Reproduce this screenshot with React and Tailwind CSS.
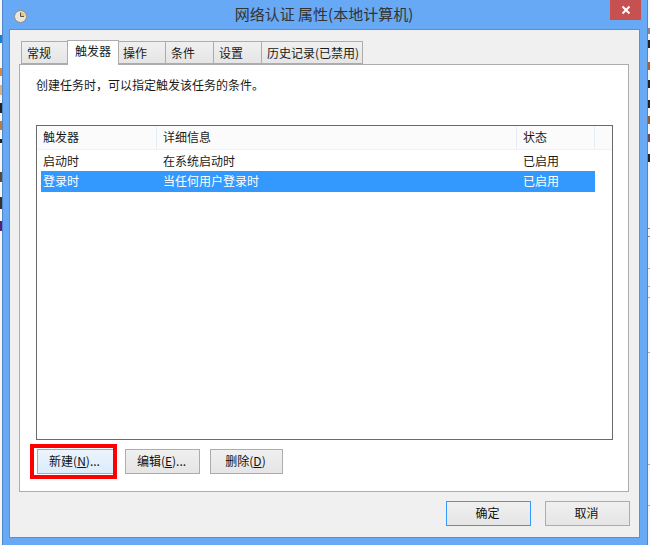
const tabs = [
  { label: '常规', w: 'w-[47px] pl-[5px]' },
  { label: '触发器', w: 'w-[52px] pl-[7px]', active: true },
  { label: '操作', w: 'w-[48px] pl-[4px]' },
  { label: '条件', w: 'w-[49px] pl-[5px]' },
  { label: '设置', w: 'w-[49px] pl-[5px]' },
  { label: '历史记录(已禁用)', w: 'w-[102px] pl-[5px]' },
]

const rows = [
  { name: '启动时', detail: '在系统启动时', state: '已启用' },
  { name: '登录时', detail: '当任何用户登录时', state: '已启用', selected: true },
]

// bits of the window behind the dialog, cut off at the screen edges
const leftBits = [
  'mt-[35px] h-[8px] bg-[#1b7fd0]',
  'mt-[25px] h-[8px] bg-[#d98a3a]',
  'mt-[9px] h-[10px] bg-[#e0b080]',
  'mt-[8px] h-[10px] bg-[#222222]',
  'mt-[8px] h-[9px] bg-[#c77a30]',
  'mt-[9px] h-[4px] bg-[#222222]',
  'mt-[29px] h-[10px] bg-[#5a4a30]',
  'mt-[15px] h-[12px] bg-[#3a3028]',
  'mt-[12px] h-[10px] bg-[#5a1a80]',
]

const rightBits = [
  'mt-[28px] h-[6px] bg-[#888888]',
  'mt-[6px] h-[8px] bg-[#222222]',
  'mt-[14px] h-[8px] bg-[#b0602a]',
  'mt-[10px] h-[8px] bg-[#222222]',
  'mt-[12px] h-[8px] bg-[#222222]',
  'mt-[8px] h-[8px] bg-[#a05a30]',
  'mt-[10px] h-[8px] bg-[#704a50]',
  'mt-[12px] h-[8px] bg-[#222222]',
  'mt-[66px] h-px bg-[#888888]',
  'mt-[7px] h-px bg-[#888888]',
  'mt-[31px] h-px bg-[#aaaaaa]',
  'mt-[17px] h-px bg-[#aaaaaa]',
  'mt-[10px] h-px bg-[#aaaaaa]',
  'mt-[54px] h-px bg-[#aaaaaa]',
  'mt-[111px] h-px bg-[#aaaaaa]',
  'mt-[40px] h-px bg-[#aaaaaa]',
]

const ClockIcon = () => (
  <svg width="13" height="13" viewBox="0 0 13 13">
    <circle cx="6.5" cy="6.5" r="6" fill="#e9e6da" stroke="#8d8d86" />
    <path d="M6.5 6.5V2A4.5 4.5 0 0 1 11 6.5Z" fill="#f0c36a" />
    <path d="M6.5 2.5v4h3.5" fill="none" stroke="#55564f" strokeWidth="1" />
  </svg>
)

const Button = ({ children, className = '', border = 'border-[#acacac]', fill = 'from-[#f0f0f0] to-[#e5e5e5]' }) => (
  <button className={`h-[25px] border bg-gradient-to-b pr-[2px] pb-[2px] text-xs text-[#111] ${border} ${fill} ${className}`}>
    {children}
  </button>
)

export default function App() {
  return (
    <div className="flex h-[545px] w-[650px] overflow-hidden bg-[#f6f6f6] font-['Noto_Sans_CJK_SC',sans-serif] text-xs text-[#1a1a1a]">
      <div className="flex w-[2px] flex-col">
        {leftBits.map((bit, i) => <div key={i} className={bit} />)}
      </div>

      <div className="h-[545px] w-[646px] border-x border-[#4f86c9] bg-[#68a9f5] px-[6px]">
        <div className="flex h-[29px] items-start">
          <div className="mt-[10px] ml-[5px] h-[13px] w-[13px]"><ClockIcon /></div>
          <div className="mt-[4px] flex-1 pl-[11px] text-center text-[15px] leading-[20px] text-[#333]">网络认证 属性(本地计算机)</div>
          <div className="flex h-[20px] w-[31px] items-center justify-center bg-[#c75050]">
            <svg width="10" height="10" viewBox="0 0 10 10"><path d="M1.5 1.5l7 7M8.5 1.5l-7 7" stroke="#fff" strokeWidth="2" /></svg>
          </div>
        </div>

        <div className="h-[509px] w-[631px] border border-[#5d8fc9] bg-[#f0f0f0] pt-[10px] pl-[9px]">
          <div className="flex h-[24px] items-end pl-[3px]">
            {tabs.map((tab) => (
              <div
                key={tab.label}
                className={`${tab.w} ml-[-1px] border border-[#acacac] ${
                  tab.active
                    ? 'z-10 mb-[-1px] h-[25px] border-b-0 bg-white pt-[2px]'
                    : 'h-[23px] bg-gradient-to-b from-[#f0f0f0] to-[#e5e5e5] pt-[3px]'
                }`}
              >
                {tab.label}
              </div>
            ))}
          </div>

          <div className="h-[428px] w-[610px] border border-[#acacac] bg-white pt-[12px] pl-[16px]">
            <p className="h-[48px]">创建任务时{'\uFF0C'}可以指定触发该任务的条件。</p>

            <div className="h-[315px] w-[577px] border border-[#6a6a6a] bg-white">
              <div className="flex h-[24px] border-b border-[#eef2fb] bg-[#fbfbfb]">
                <div className="w-[120px] border-r border-[#e6ecf8] pt-[3px] pl-[6px]">触发器</div>
                <div className="w-[360px] border-r border-[#e6ecf8] pt-[3px] pl-[6px]">详细信息</div>
                <div className="w-[78px] border-r border-[#e6ecf8] pt-[3px] pl-[6px]">状态</div>
              </div>
              {rows.map((row) => (
                <div key={row.name} className={`ml-[4px] flex h-[21px] w-[554px] items-center ${row.selected ? 'bg-[#3399ff] pb-[2px] text-white' : ''}`}>
                  <div className="w-[120px] pl-[2px]">{row.name}</div>
                  <div className="w-[360px] pl-[2px]">{row.detail}</div>
                  <div className="pl-[2px]">{row.state}</div>
                </div>
              ))}
            </div>

            <div className="mt-[9px] ml-[1px] flex">
              <div className="relative">
                <Button className="w-[77px]" border="border-[#7eb4ea]" fill="from-[#ecf4fc] to-[#dcecfc]">新建(<span className="underline">N</span>)...</Button>
                <div className="pointer-events-none absolute -top-[5px] -left-[7px] h-[35px] w-[87px] border-4 border-[#ff0000]" />
              </div>
              <Button className="ml-[11px] w-[75px]">编辑(<span className="underline">E</span>)...</Button>
              <Button className="ml-[10px] w-[73px]">删除(<span className="underline">D</span>)</Button>
            </div>
          </div>

          <div className="mt-[9px] flex justify-end gap-[14px] pr-[9px]">
            <Button className="w-[85px]" border="border-[#3399ff]">确定</Button>
            <Button className="w-[85px]">取消</Button>
          </div>
        </div>
      </div>

      <div className="flex w-[2px] flex-col">
        {rightBits.map((bit, i) => <div key={i} className={bit} />)}
      </div>
    </div>
  )
}
